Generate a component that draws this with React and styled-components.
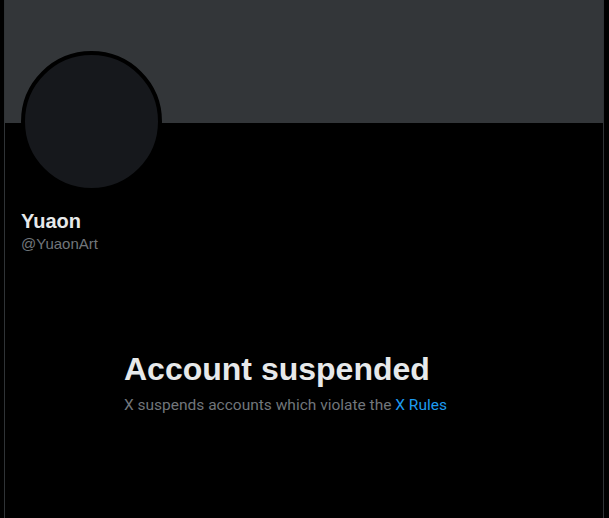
import React from "react";
import styled, { createGlobalStyle } from "styled-components";

const Global = createGlobalStyle`
  html, body {
    margin: 0;
    background: #000;
  }
  body {
    font-family: Roboto, "Liberation Sans", Arial, sans-serif;
    color: #e7e9ea;
  }
`;

const Column = styled.main`
  margin-left: 4px;
  width: 598px;
  min-height: 100vh;
  border-left: 1px solid #2f3336;
  border-right: 1px solid #2f3336;
`;

const Banner = styled.div`
  height: 123px;
  background: #333639;
`;

const Profile = styled.section`
  padding: 0 16px;
`;

const Avatar = styled.div`
  width: 133px;
  height: 133px;
  margin-top: -72px;
  border: 4px solid #000;
  border-radius: 50%;
  background: #16181c;
`;

const Name = styled.h2`
  margin: 17px 0 0;
  font-family: "Liberation Sans", Arial, sans-serif;
  font-size: 20px;
  font-weight: 700;
  line-height: 24px;
  color: #e7e9ea;
`;

const Handle = styled.div`
  margin-top: 1px;
  font-family: "Liberation Sans", Arial, sans-serif;
  font-size: 15px;
  line-height: 20px;
  color: #71767b;
`;

const Empty = styled.div`
  width: 360px;
  margin: 97px auto 0;
`;

const Title = styled.h1`
  margin: 0;
  font-family: "Liberation Sans", Arial, sans-serif;
  font-size: 32px;
  font-weight: 800;
  line-height: 36px;
  color: #e7e9ea;
`;

const Text = styled.p`
  margin: 8px 0 0;
  font-size: 15.5px;
  line-height: 20px;
  color: #71767b;
`;

const Link = styled.a`
  color: #1d9bf0;
  text-decoration: none;
`;

export default function App() {
  return (
    <>
      <Global />
      <Column>
        <Banner />
        <Profile>
          <Avatar />
          <Name>Yuaon</Name>
          <Handle>@YuaonArt</Handle>
        </Profile>
        <Empty>
          <Title>Account suspended</Title>
          <Text>
            X suspends accounts which violate the <Link href="#">X Rules</Link>
          </Text>
        </Empty>
      </Column>
    </>
  );
}
